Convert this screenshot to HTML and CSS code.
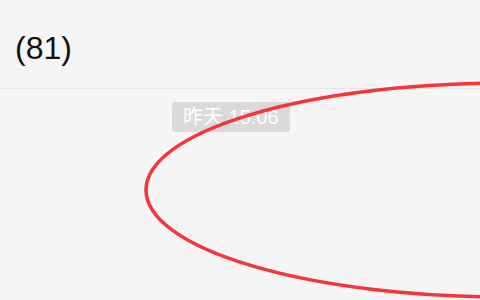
FILE: index.html
```html
<!DOCTYPE html>
<html lang="zh">
<head>
<meta charset="utf-8">
<link rel="stylesheet" href="styles.css">
</head>
<body>
<div class="window">
  <header class="header"><span class="title">(81)</span></header>
  <div class="messages">
    <div class="time-row"><span class="time">昨天 15:06</span></div>
  </div>
  <svg class="annotation" width="480" height="300" viewBox="0 0 480 300" aria-hidden="true">
    <ellipse cx="506" cy="190" rx="360" ry="107" fill="none" stroke="#f5343b" stroke-width="3.5"/>
  </svg>
</div>
</body>
</html>
```
FILE: styles.css
```css
html, body {
  margin: 0;
  padding: 0;
  background: #f5f5f5;
}
.window {
  position: relative;
  width: 480px;
  height: 300px;
  overflow: hidden;
  background: #f5f5f5;
  font-family: "Liberation Sans", "Noto Sans CJK SC", sans-serif;
}
.header {
  box-sizing: border-box;
  height: 89px;
  padding: 30px 0 0 15px;
  border-bottom: 1px solid #e5e5e5;
  background: #f5f5f5;
}
.title {
  display: block;
  font-size: 32px;
  line-height: 36px;
  color: #111;
}
.messages {
  padding-top: 13px;
}
.time-row {
  display: flex;
  padding-left: 172px;
}
.time {
  display: block;
  height: 30px;
  line-height: 30px;
  padding: 0 11px;
  border-radius: 4px;
  background: #dadada;
  color: #fff;
  font-size: 20px;
}
.annotation {
  position: absolute;
  left: 0;
  top: 0;
}
```
